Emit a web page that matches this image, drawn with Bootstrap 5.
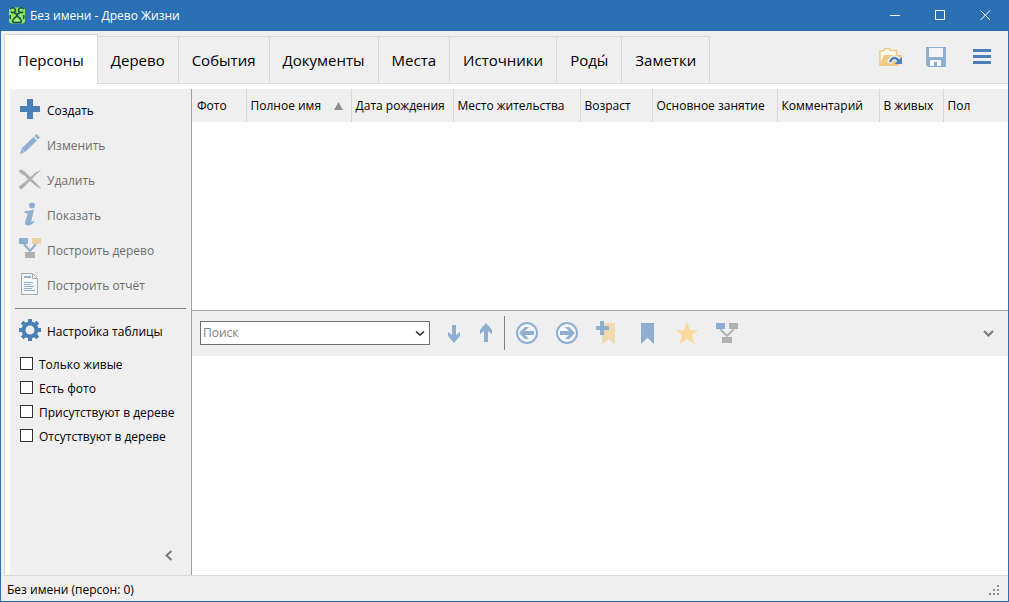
<!DOCTYPE html>
<html lang="ru">
<head>
<meta charset="utf-8">
<meta name="viewport" content="width=device-width, initial-scale=1">
<title>Без имени - Древо Жизни</title>
<link rel="stylesheet" href="https://cdn.jsdelivr.net/npm/bootstrap@5.3.0/dist/css/bootstrap.min.css">
<script src="https://cdn.jsdelivr.net/npm/bootstrap@5.3.0/dist/js/bootstrap.bundle.min.js" defer></script>
<style>
  :root { --frame: #2a70b2; --face: #efefef; --line: #d9d9d9; --blue: #4a80b9; }
  body { font: 12px/18px "Open Sans", "Noto Sans", sans-serif; color: #000; background: var(--face); }
  svg { display: block; flex: none; }
  button { font: inherit; color: inherit; background: none; border: 0; padding: 0; }
  .app-window { border: 1px solid var(--frame); border-top: 0; }
  .titlebar { height: 31px; background: var(--frame); color: #fff; padding-left: 7px; }
  .titlebar h1 { font-size: 12px; line-height: 18px; font-weight: 400; }
  .win-btn { width: 45px; height: 31px; padding-right: 1px; }
  .tab-strip { height: 53px; padding: 3px 0 0 3px; border: 0; }
  .tab-strip::after { content: ""; flex: 1; border-bottom: 1px solid var(--line); order: 1; }
  .tab-strip .nav-link { height: 48px; margin: 0; border: 1px solid var(--line); border-left: 0; border-radius: 0; padding: 0 13px; font-size: 15px; line-height: 20px; color: #000; background: var(--face); }
  .tab-strip .nav-link.active { height: 50px; border: 1px solid var(--line); border-bottom: 0; background: #fff; }
  .head-tools { border-bottom: 1px solid var(--line); gap: 23px; padding: 0 17px 1px 0; }
  .page-body { margin-left: 3px; padding: 5px 0 0 5px; background: #fff; border-left: 1px solid var(--line); border-bottom: 1px solid var(--line); min-height: 0; }
  .side { width: 182px; background: var(--face); border-right: 1px solid #a0a0a0; padding-top: 3px; }
  .side-btn { height: 35px; padding: 3px 0 0 9px; gap: 6px; text-align: left; }
  .side-btn:disabled { color: #6d6d6d; }
  .side-btn svg { width: 22px; height: 24px; margin-bottom: 4px; }
  .side hr { margin: 6px 5px 4px; border: 0; border-top: 1px solid #808080; opacity: 1; }
  .tick-row { height: 24px; padding: 2px 0 0 10px; gap: 6px; }
  .tick-row input { appearance: none; width: 13px; height: 13px; margin: 0 0 4px; background: #fff; border: 1px solid #333; }
  .tick-row input:checked { background: var(--blue); }
  .fold { padding: 0 18px 13px 0; }
  .people-grid { height: 221px; }
  .people-grid table { table-layout: fixed; width: 100%; }
  .people-grid th { height: 33px; padding: 0 0 0 4px; font-weight: 400; white-space: nowrap; background: var(--face); border-right: 1px solid var(--line); }
  .people-grid th:first-child { padding-left: 5px; }
  .people-grid th:last-child { border-right: 0; }
  .people-grid col.w-photo { width: 54px; }
  .people-grid col.w-name { width: 105px; }
  .people-grid col.w-birth { width: 102px; }
  .people-grid col.w-home { width: 127px; }
  .people-grid col.w-age { width: 72px; }
  .people-grid col.w-job { width: 125px; }
  .people-grid col.w-note { width: 102px; }
  .people-grid col.w-alive { width: 64px; }
  .search-bar { height: 46px; background: var(--face); border-top: 1px solid #a0a0a0; padding: 0 14px 1px 8px; }
  .combo { width: 230px; height: 24px; background: #fff; border: 1px solid #6f6f6f; }
  .combo input { border: 0; outline: 0; padding: 0 2px; min-width: 0; font: inherit; }
  .combo input::placeholder { color: #808080; opacity: 1; }
  .nav-arrows { margin-left: 16px; gap: 16px; }
  .split { width: 1px; height: 34px; background: #808080; margin: 0 11px 0 10px; }
  .marks { gap: 18px; }
  .status { height: 25px; padding: 2px 9px 0 6px; }
</style>
</head>
<body>
<div class="app-window d-flex flex-column vh-100">
  <header class="titlebar d-flex align-items-center">
    <svg width="18" height="17" viewBox="0 0 17 17"><rect x="0.5" y="0.5" width="16" height="16" rx="3" fill="#8ee85c"/><g fill="none" stroke="#1c4a55" stroke-width="1.500"><path d="M1.500 2Q5-.5 6.500 2T5 5.500Q3 6 2.500 4.500"/><path d="M15.500 2Q12-.5 10.500 2T12 5.500Q14 6 14.500 4.500"/><path d="M5.500 6Q8 6 8.500 8.500Q9 6 11.500 6M8.500 8Q8 10 5.500 11.500Q3 14 5 15.500H12Q14 14 11.500 11.500Q9 10 8.500 8"/><path d="M2 8Q1 10 2 12M15 8Q16 10 15 12"/></g><path d="M8.500 11L11 14H6Z" fill="#b6f586"/></svg>
    <h1 class="mb-0 ms-1 me-auto">Без имени - Древо Жизни</h1>
    <button class="win-btn d-flex align-items-center justify-content-center" aria-label="Свернуть"><svg width="11" height="11"><path d="M0 5.500H10" stroke="#fff"/></svg></button>
    <button class="win-btn d-flex align-items-center justify-content-center" aria-label="Развернуть"><svg width="11" height="11"><path d="M.5.500H9.500V9.500H.5Z" fill="none" stroke="#fff"/></svg></button>
    <button class="win-btn d-flex align-items-center justify-content-center" aria-label="Закрыть"><svg width="11" height="11"><path d="M.5.500L10 10M10 .5L.5 10" stroke="#fff"/></svg></button>
  </header>

  <div class="d-flex">
    <nav class="tab-strip nav nav-tabs flex-nowrap flex-grow-1 align-items-end" role="tablist">
      <button class="nav-link active" role="tab" aria-selected="true">Персоны</button>
      <button class="nav-link" role="tab">Дерево</button>
      <button class="nav-link" role="tab">События</button>
      <button class="nav-link" role="tab">Документы</button>
      <button class="nav-link" role="tab">Места</button>
      <button class="nav-link" role="tab">Источники</button>
      <button class="nav-link" role="tab">Роды́</button>
      <button class="nav-link" role="tab">Заметки</button>
    </nav>
    <div class="head-tools d-flex align-items-center">
      <button aria-label="Открыть"><svg width="24" height="20" viewBox="0 0 24 20"><path d="M1 18V4H4L6 1.500H10L11 3.500H17.500V8" fill="#fffaf0" stroke="#efca86" stroke-width="1.500"/><path d="M0 19L5 8H23L19 19Z" fill="#efca86"/><path d="M10 16Q13 9 17.500 11.500L20 14" fill="none" stroke="#f7f2e8" stroke-width="5"/><path d="M11 15Q13.500 9.500 17.500 11.500L20 14" fill="none" stroke="#4a80b9" stroke-width="2.500"/><path d="M23 10V17H15.500Z" fill="#4a80b9"/></svg></button>
      <button aria-label="Сохранить"><svg width="20" height="20" viewBox="0 0 20 20"><path d="M0 0H20V20H2L0 18Z" fill="#8eafd0"/><path d="M3 1H17V10H3ZM4 13H15V19H4Z" fill="#f5f5f5"/><path d="M8 15H11V19H8Z" fill="#8eafd0"/></svg></button>
      <button class="ms-1" aria-label="Меню"><svg width="18" height="16" viewBox="0 0 18 16"><path d="M0 1.500H18M0 7.500H18M0 13.500H18" stroke="#4a80b9" stroke-width="3"/></svg></button>
    </div>
  </div>

  <main class="page-body d-flex flex-grow-1">
    <aside class="side d-flex flex-column flex-shrink-0">
      <button class="side-btn d-flex align-items-center"><svg viewBox="0 0 22 24"><path d="M8 2H14V9H21V15H14V22H8V15H1V9H8Z" fill="#4a80b9"/></svg>Создать</button>
      <button class="side-btn d-flex align-items-center" disabled><svg viewBox="0 0 22 24"><path d="M1 22L2.500 16.500L14.500 5L18 8.500L6 20Z M15.500 4L17.500 2L21 5.500L19 7.500Z" fill="#8eafd0"/><path d="M2.500 17L6 20.500" stroke="#dde7f1" stroke-width=".8"/></svg>Изменить</button>
      <button class="side-btn d-flex align-items-center" disabled><svg viewBox="0 0 22 24"><path d="M0 4Q2 1 5 4L11.500 10Q16 5 21.500 3Q22 4 20 5Q16 8 13 12Q17 16 22 21Q21 22 17 19L11 14Q7 18 3 22Q0 23 0 19Q4 17 9 12.500Q6 8 1 6Z" fill="#b0b0b0"/></svg>Удалить</button>
      <button class="side-btn d-flex align-items-center" disabled><svg viewBox="0 0 22 24"><circle cx="13" cy="3.500" r="3" fill="#8eafd0"/><path d="M6 9Q10 9 15 7.500L12.500 18Q11.500 21.500 15 18.500L15.500 19.500Q12 24 8 23.500Q5 23 6.500 19L8.500 12.500Q9 10.500 5.500 11Z" fill="#8eafd0"/></svg>Показать</button>
      <button class="side-btn d-flex align-items-center" disabled><svg viewBox="0 0 22 24"><path d="M5 7L11 14L17 7" fill="none" stroke="#8eafd0" stroke-width="2"/><path d="M0 1H9V7H0Z" fill="#8eafd0"/><path d="M13 1H22V7H13Z" fill="#ebd2a3"/><path d="M6 15H16V21H6Z" fill="#b0b0b0"/></svg>Построить дерево</button>
      <button class="side-btn d-flex align-items-center" disabled><svg viewBox="0 0 22 24"><path d="M2.500 1.500H13.500L18.500 6.500V22.500H2.500Z" fill="#f7f7f7" stroke="#aaa"/><path d="M13.500 1.500V6.500H18.500" fill="none" stroke="#aaa"/><path d="M5 5H12" stroke="#8eafd0" stroke-width="2"/><path d="M5 10.500H14M5 12.500H12M5 14.500H15M5 16.500H13M5 18.500H16" stroke="#8eafd0"/></svg>Построить отчёт</button>
      <hr>
      <button class="side-btn d-flex align-items-center"><svg viewBox="0 0 22 24"><g transform="translate(11 12)" fill="none" stroke="#4a80b9"><circle r="6.500" stroke-width="4"/><path d="M0-7V-11M0 7V11M7 0H11M-7 0H-11M5 5L7.800 7.800M-5 5L-7.800 7.800M5-5L7.800-7.800M-5-5L-7.800-7.800" stroke-width="4"/></g></svg>Настройка таблицы</button>
      <div class="pt-1">
        <label class="tick-row d-flex align-items-center"><input type="checkbox">Только живые</label>
        <label class="tick-row d-flex align-items-center"><input type="checkbox">Есть фото</label>
        <label class="tick-row d-flex align-items-center"><input type="checkbox">Присутствуют в дереве</label>
        <label class="tick-row d-flex align-items-center"><input type="checkbox">Отсутствуют в дереве</label>
      </div>
      <div class="fold mt-auto d-flex justify-content-end"><button aria-label="Свернуть панель"><svg width="9" height="14" viewBox="0 0 9 14"><path d="M7.500 3L2.500 7.500L7.500 12" fill="none" stroke="#777" stroke-width="2"/></svg></button></div>
    </aside>

    <section class="flex-grow-1 overflow-hidden">
      <div class="people-grid">
        <table>
          <colgroup><col class="w-photo"><col class="w-name"><col class="w-birth"><col class="w-home"><col class="w-age"><col class="w-job"><col class="w-note"><col class="w-alive"><col></colgroup>
          <thead><tr>
            <th scope="col">Фото</th>
            <th scope="col"><span class="d-flex align-items-center justify-content-between pe-2">Полное имя <svg width="9" height="8"><path d="M4.500 0L9 8H0Z" fill="#909090"/></svg></span></th>
            <th scope="col">Дата рождения</th>
            <th scope="col">Место жительства</th>
            <th scope="col">Возраст</th>
            <th scope="col">Основное занятие</th>
            <th scope="col">Комментарий</th>
            <th scope="col">В живых</th>
            <th scope="col">Пол</th>
          </tr></thead>
          <tbody></tbody>
        </table>
      </div>
      <div class="search-bar d-flex align-items-center">
        <div class="combo d-flex align-items-center"><input class="flex-grow-1" type="text" placeholder="Поиск" aria-label="Поиск"><button class="px-1" aria-label="Список"><svg width="10" height="7"><path d="M1 1.500L5 5L9 1.500" fill="none" stroke="#222" stroke-width="1.500"/></svg></button></div>
        <div class="nav-arrows d-flex">
          <button aria-label="Найти далее"><svg width="16" height="20" viewBox="0 0 16 20"><path d="M6 2H10V12L14 9V13L8 20L2 13V9L6 12Z" fill="#8eafd0"/></svg></button>
          <button aria-label="Найти ранее"><svg width="16" height="20" viewBox="0 0 16 20"><path d="M6 19H10V8L14 11V7L8 0L2 7V11L6 8Z" fill="#8eafd0"/></svg></button>
        </div>
        <div class="split"></div>
        <div class="marks d-flex align-items-center">
          <button aria-label="Назад"><svg width="22" height="22" viewBox="0 0 22 22"><circle cx="11" cy="11" r="10" fill="#f4f6f8" stroke="#8eafd0" stroke-width="2"/><path d="M3 11L9 5H13L9 9H18V13H9L13 17H9Z" fill="#8eafd0"/></svg></button>
          <button aria-label="Вперёд"><svg width="22" height="22" viewBox="0 0 22 22"><circle cx="11" cy="11" r="10" fill="#f4f6f8" stroke="#8eafd0" stroke-width="2"/><path d="M19 11L13 5H9L13 9H4V13H13L9 17H13Z" fill="#8eafd0"/></svg></button>
          <button aria-label="Добавить закладку"><svg width="22" height="24" viewBox="0 0 22 24"><path d="M6 2H19V24L12.500 18L6 24Z" fill="#f0d9ac"/><path d="M4 0H8V5H13V9H8V14H4V9H-1V5H4Z" fill="#8eafd0" /></svg></button>
          <button aria-label="Закладки"><svg width="22" height="22" viewBox="0 0 22 22"><path d="M5 1H18V22L11.500 16L5 22Z" fill="#8eafd0"/></svg></button>
          <button aria-label="Избранное"><svg width="22" height="22" viewBox="0 0 22 22"><path d="M11 0L14 8H22L16 13.500L18.500 22L11 17L3.500 22L6 13.500L0 8H8Z" fill="#f9d99d"/></svg></button>
          <button aria-label="Дерево связей"><svg width="22" height="22" viewBox="0 0 22 22"><path d="M4 7L11 14L18 7" fill="none" stroke="#b0b0b0" stroke-width="1.800"/><path d="M0 1H9V7H0Z" fill="#8eafd0"/><path d="M13 1H22V7H13ZM6 15H16V21H6Z" fill="#b0b0b0"/></svg></button>
        </div>
        <button class="ms-auto" aria-label="Свернуть"><svg width="11" height="9"><path d="M1 2L5.500 6.500L10 2" fill="none" stroke="#777" stroke-width="2"/></svg></button>
      </div>
    </section>
  </main>

  <footer class="status d-flex align-items-center">
    <span class="me-auto">Без имени (персон: 0)</span>
    <svg width="10" height="10"><path d="M8 0h2v2h-2zM4 4h2v2h-2zM8 4h2v2h-2zM0 8h2v2h-2zM4 8h2v2h-2zM8 8h2v2h-2z" fill="#8c8c8c"/></svg>
  </footer>
</div>
</body>
</html>
